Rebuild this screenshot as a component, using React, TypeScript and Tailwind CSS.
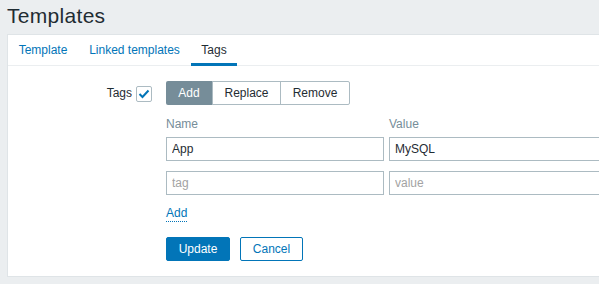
import React from 'react';

const tabs = [
  { label: 'Template', width: 'w-[70px]', active: false },
  { label: 'Linked templates', width: 'w-[113px]', active: false },
  { label: 'Tags', width: 'w-[46px]', active: true },
];

const rows = [
  { name: 'App', value: 'MySQL' },
  { name: '', value: '' },
];

export default function App() {
  return (
    <div className="w-[599px] h-[284px] overflow-hidden bg-[#ebeef0] font-['Liberation_Sans',Arial,sans-serif] text-[12px] text-[#1f2c33]">
      <div className="h-[34px] pl-[7px] pt-[4px]">
        <h1 className="text-[21px] leading-[24px] tracking-[0.3px]">Templates</h1>
      </div>

      <div className="ml-[7px] w-[660px] bg-white border border-[#dfe4e7] pb-[15px]">
        <div className="flex border-b border-[#ebeef0]">
          {tabs.map((t) => (
            <div
              key={t.label}
              className={
                t.active
                  ? `${t.width} h-[31px] -mb-px pt-[2px] flex items-center justify-center whitespace-nowrap border-b-[3px] border-[#0275b8] text-[#1f2c33]`
                  : `${t.width} h-[31px] -mb-px pt-[2px] flex items-center justify-center whitespace-nowrap border-b-[3px] border-transparent text-[#0275b8]`
              }
            >
              {t.label}
            </div>
          ))}
        </div>

        <div className="pt-[15px] flex">
          <div className="w-[158px] h-[24px] pr-[14px] flex items-center justify-end gap-[4px]">
            <span className="leading-[14px]">Tags</span>
            <span className="w-[16px] h-[16px] mt-[2px] border border-[#acbbc2] rounded-[2px] bg-white flex items-center justify-center">
              <svg width="14" height="14" viewBox="0 0 14 14">
                <polyline points="2.5,7 5.5,10 11.5,3.5" fill="none" stroke="#0275b8" strokeWidth="2" />
              </svg>
            </span>
          </div>

          <div className="flex flex-col">
            <div className="flex h-[24px]">
              <div className="w-[46px] bg-[#768d99] text-white rounded-l-[2px] flex items-center justify-center">Add</div>
              <div className="w-[69px] border border-[#acbbc2] flex items-center justify-center">Replace</div>
              <div className="w-[70px] -ml-px border border-[#acbbc2] rounded-r-[2px] flex items-center justify-center">Remove</div>
            </div>

            <div className="grid grid-cols-[218px_218px] gap-x-[5px] mt-[12px] leading-[14px] text-[#768d99]">
              <div>Name</div>
              <div>Value</div>
            </div>

            {rows.map((r, i) => (
              <div key={i} className={i === 0 ? 'grid grid-cols-[218px_218px] gap-x-[5px] mt-[6px]' : 'grid grid-cols-[218px_218px] gap-x-[5px] mt-[10px]'}>
                <input
                  readOnly
                  value={r.name}
                  placeholder="tag"
                  className="h-[24px] px-[5px] border border-[#acbbc2] bg-white text-[12px] text-[#1f2c33] outline-none placeholder:text-[#a3a3a3]"
                />
                <input
                  readOnly
                  value={r.value}
                  placeholder="value"
                  className="h-[24px] px-[5px] border border-[#acbbc2] bg-white text-[12px] text-[#1f2c33] outline-none placeholder:text-[#a3a3a3]"
                />
              </div>
            ))}

            <div className="mt-[11px] flex">
              <span className="leading-[15px] text-[#0275b8] border-b border-dotted border-[#0275b8]">Add</span>
            </div>

            <div className="mt-[15px] flex gap-[10px]">
              <button className="w-[64px] h-[24px] rounded-[2px] bg-[#0275b8] border border-[#0275b8] text-white">Update</button>
              <button className="w-[63px] h-[24px] rounded-[2px] bg-white border border-[#0275b8] text-[#0275b8]">Cancel</button>
            </div>
          </div>
        </div>
      </div>
    </div>
  );
}
